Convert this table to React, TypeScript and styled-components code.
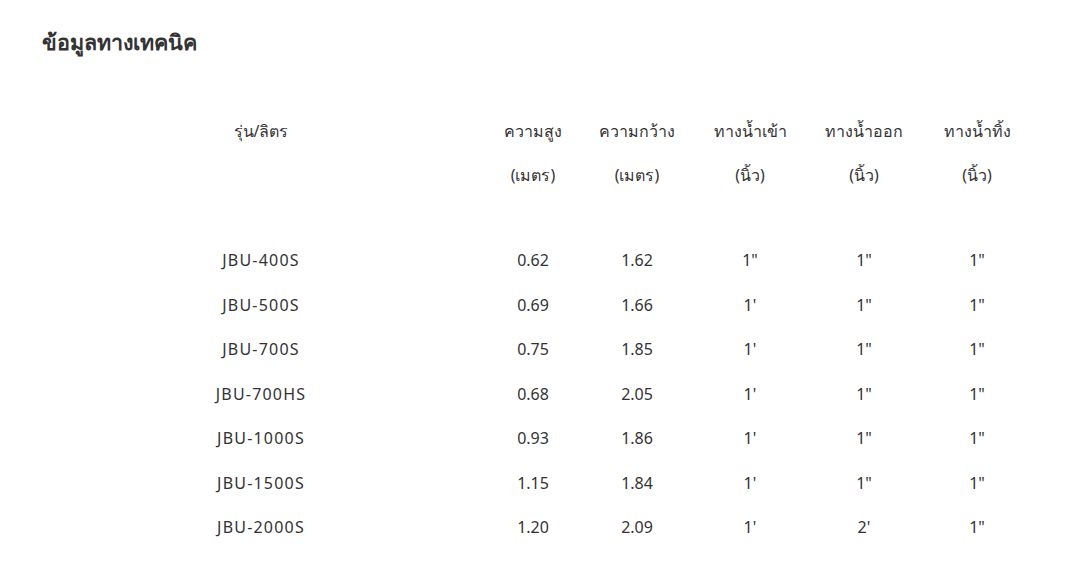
import React from 'react';
import styled, {createGlobalStyle} from 'styled-components';

const GlobalStyle = createGlobalStyle`
  html, body {
    margin: 0;
    padding: 0;
    background: #ffffff;
  }
  body {
    font-family: 'Noto Sans', 'DejaVu Sans', sans-serif;
    color: #333333;
  }
`;

const COLUMNS = '438px 106px 102px 124px 104px 122px';

const Page = styled.div`
  width: 1070px;
  height: 572px;
  padding-left: 42px;
  box-sizing: border-box;
  overflow: hidden;
`;

const Heading = styled.h2`
  margin: 26px 0 0;
  font-size: 21.5px;
  line-height: 32px;
  font-weight: 700;
  color: #333333;
`;

const Table = styled.div`
  margin-top: 51px;
  display: flex;
  flex-direction: column;
`;

const HeadRow = styled.div`
  display: grid;
  grid-template-columns: ${COLUMNS};
  padding-bottom: 41px;
`;

const HeadCell = styled.div`
  text-align: center;
  font-size: 16px;
  line-height: 44px;
  color: #333333;
`;

const Row = styled.div`
  display: grid;
  grid-template-columns: ${COLUMNS};
`;

const Cell = styled.div<{$model?: boolean}>`
  text-align: center;
  font-size: 16px;
  line-height: 44.5px;
  color: #333333;
  white-space: nowrap;
  letter-spacing: ${(p) => (p.$model ? '1.2px' : '0')};
`;

const headers: [string, string][] = [
  ['รุ่น/ลิตร', ''],
  ['ความสูง', '(เมตร)'],
  ['ความกว้าง', '(เมตร)'],
  ['ทางน้ำเข้า', '(นิ้ว)'],
  ['ทางน้ำออก', '(นิ้ว)'],
  ['ทางน้ำทิ้ง', '(นิ้ว)'],
];

const rows: string[][] = [
  ['JBU-400S', '0.62', '1.62', '1"', '1"', '1"'],
  ['JBU-500S', '0.69', '1.66', "1'", '1"', '1"'],
  ['JBU-700S', '0.75', '1.85', "1'", '1"', '1"'],
  ['JBU-700HS', '0.68', '2.05', "1'", '1"', '1"'],
  ['JBU-1000S', '0.93', '1.86', "1'", '1"', '1"'],
  ['JBU-1500S', '1.15', '1.84', "1'", '1"', '1"'],
  ['JBU-2000S', '1.20', '2.09', "1'", "2'", '1"'],
];

export default function App() {
  return (
    <Page>
      <GlobalStyle />
      <Heading>ข้อมูลทางเทคนิค</Heading>
      <Table>
        <HeadRow>
          {headers.map(([top, bottom]) => (
            <HeadCell key={top}>
              {top}
              {bottom && <br />}
              {bottom}
            </HeadCell>
          ))}
        </HeadRow>
        {rows.map((row) => (
          <Row key={row[0]}>
            {row.map((value, i) => (
              <Cell key={i} $model={i === 0}>
                {value}
              </Cell>
            ))}
          </Row>
        ))}
      </Table>
    </Page>
  );
}
